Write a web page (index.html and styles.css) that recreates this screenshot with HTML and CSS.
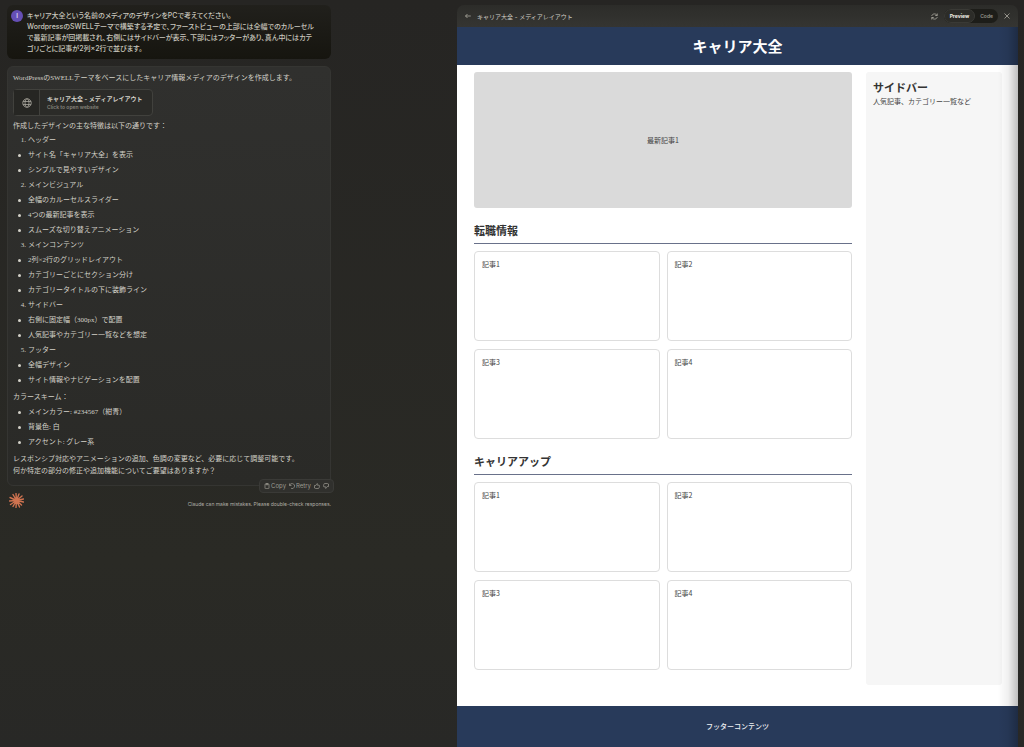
FILE: index.html
```html
<!DOCTYPE html>
<html lang="ja">
<head>
<meta charset="utf-8">
<meta name="viewport" content="width=device-width, initial-scale=1">
<title>キャリア大全 - メディアレイアウト</title>
<link rel="stylesheet" href="styles.css">
</head>
<body>
<div class="app">
  <section class="chat" aria-label="Chat">
    <div class="prompt">
      <span class="avatar">I</span>
      <p class="prompt-text">キャリア大全という名前のメディアのデザインをPCで考えてください。<br>WordpressのSWELLテーマで構築する予定で、ファーストビューの上部には全幅でのカルーセル<br>で最新記事が回掲載され、右側にはサイドバーが表示、下部にはフッターがあり、真ん中にはカテ<br>ゴリごとに記事が2列×2行で並びます。</p>
    </div>

    <article class="reply">
      <p>WordPressのSWELLテーマをベースにしたキャリア情報メディアのデザインを作成します。</p>
      <button class="artifact" type="button">
        <span class="artifact-icon">
          <svg width="10" height="10" viewBox="0 0 20 20" fill="none" stroke="currentColor" stroke-width="1.6"><circle cx="10" cy="10" r="8.5"/><ellipse cx="10" cy="10" rx="4" ry="8.5"/><path d="M2 7h16M2 13h16"/></svg>
        </span>
        <span class="artifact-label">
          <span class="artifact-title">キャリア大全 - メディアレイアウト</span>
          <span class="artifact-hint">Click to open website</span>
        </span>
      </button>
      <p>作成したデザインの主な特徴は以下の通りです：</p>
      <ol class="features">
        <li><span class="row">ヘッダー</span>
          <ul class="bullets"><li>サイト名「キャリア大全」を表示</li><li>シンプルで見やすいデザイン</li></ul></li>
        <li><span class="row">メインビジュアル</span>
          <ul class="bullets"><li>全幅のカルーセルスライダー</li><li>4つの最新記事を表示</li><li>スムーズな切り替えアニメーション</li></ul></li>
        <li><span class="row">メインコンテンツ</span>
          <ul class="bullets"><li>2列×2行のグリッドレイアウト</li><li>カテゴリーごとにセクション分け</li><li>カテゴリータイトルの下に装飾ライン</li></ul></li>
        <li><span class="row">サイドバー</span>
          <ul class="bullets"><li>右側に固定幅（300px）で配置</li><li>人気記事やカテゴリー一覧などを想定</li></ul></li>
        <li><span class="row">フッター</span>
          <ul class="bullets"><li>全幅デザイン</li><li>サイト情報やナビゲーションを配置</li></ul></li>
      </ol>
      <p class="colors-title">カラースキーム：</p>
      <ul class="bullets colors"><li>メインカラー: #234567（紺青）</li><li>背景色: 白</li><li>アクセント: グレー系</li></ul>
      <p>レスポンシブ対応やアニメーションの追加、色調の変更など、必要に応じて調整可能です。<br>何か特定の部分の修正や追加機能についてご要望はありますか？</p>

      <div class="actions">
        <button type="button"><svg width="6" height="6" viewBox="0 0 12 12" fill="none" stroke="currentColor" stroke-width="1.4"><rect x="2" y="2" width="8" height="9.3" rx="1"/><path d="M4 1h4v2.5H4z"/></svg>Copy</button>
        <button type="button"><svg width="6" height="6" viewBox="0 0 12 12" fill="none" stroke="currentColor" stroke-width="1.4"><path d="M1 1v4h4M1.3 5A5 5 0 1 1 4 10.6"/></svg>Retry</button>
        <button type="button" aria-label="Good response"><svg width="6" height="6" viewBox="0 0 12 12" fill="none" stroke="currentColor" stroke-width="1.4"><path d="M1 5h2.5L6 1.2c1.4 0 1.5 1.3 1 3.3h3.2c1 0 1 1 .8 1.8L10 10c-.2.6-.6 1-1.2 1H3.5L1 10z"/></svg></button>
        <button type="button" aria-label="Bad response"><svg width="6" height="6" viewBox="0 0 12 12" fill="none" stroke="currentColor" stroke-width="1.4"><path d="M11 7H8.5L6 10.8c-1.4 0-1.5-1.3-1-3.3H1.8c-1 0-1-1-.8-1.8L2 2c.2-.6.6-1 1.200-1h5.300L11 2z"/></svg></button>
      </div>
    </article>

    <footer class="chat-foot">
      <svg class="spark" width="15" height="15" viewBox="0 0 30 30" fill="none" stroke="currentColor" stroke-width="2.8" stroke-linecap="round"><path d="M15 15 14 1M15 15 20 2M15 15 26 6M15 15 29 12M15 15 29 18M15 15 25 24M15 15 21 28M15 15 14 29M15 15 8 27M15 15 3 23M15 15 1 16M15 15 2 9M15 15 8 3"/></svg>
      <span class="disclaimer">Claude can make mistakes. Please double-check responses.</span>
    </footer>
  </section>

  <section class="panel" aria-label="Preview">
    <div class="toolbar">
      <button class="icon-button" type="button" aria-label="Back"><svg width="6" height="6" viewBox="0 0 12 12" fill="none" stroke="currentColor" stroke-width="1.5"><path d="M11.5 6H1M5 2 1 6l4 4"/></svg></button>
      <span class="toolbar-title">キャリア大全 - メディアレイアウト</span>
      <button class="icon-button" type="button" aria-label="Refresh"><svg width="7" height="7" viewBox="0 0 14 14" fill="none" stroke="currentColor" stroke-width="1.5"><path d="M1.5 6C2 3.3 4.3 1.8 7 1.8c2.200 0 4 1.200 5 3M12.500 1v4h-4M12.500 8c-.5 2.700-2.800 4.200-5.500 4.200-2.200 0-4-1.200-5-3M1.500 13V9h4"/></svg></button>
      <div class="tabs">
        <button class="tab tab-active" type="button">Preview</button>
        <button class="tab" type="button">Code</button>
      </div>
      <button class="icon-button" type="button" aria-label="Close"><svg width="6" height="6" viewBox="0 0 12 12" fill="none" stroke="currentColor" stroke-width="1.5"><path d="m1 1 10 10M11 1 1 11"/></svg></button>
    </div>

    <div class="site">
      <header class="site-header"><h1>キャリア大全</h1></header>
      <div class="site-body">
        <main>
          <div class="hero">最新記事1</div>
          <section class="category">
            <h2>転職情報</h2>
            <div class="cards"><article>記事1</article><article>記事2</article><article>記事3</article><article>記事4</article></div>
          </section>
          <section class="category">
            <h2>キャリアアップ</h2>
            <div class="cards"><article>記事1</article><article>記事2</article><article>記事3</article><article>記事4</article></div>
          </section>
        </main>
        <aside class="sidebar">
          <h2>サイドバー</h2>
          <p>人気記事、カテゴリー一覧など</p>
        </aside>
      </div>
      <footer class="site-footer">フッターコンテンツ</footer>
    </div>
  </section>
</div>
</body>
</html>
```
FILE: styles.css
```css
* { box-sizing: border-box; }
body, p, h1, h2, ul, ol { margin: 0; padding: 0; }
ul, ol { list-style: none; }
button {
  margin: 0;
  padding: 0;
  border: 0;
  background: none;
  color: inherit;
  font: inherit;
}
svg { display: block; flex: none; }

body {
  background: linear-gradient(#262523, #2a2a25 75%, #282826);
  color: #c9c7be;
  font-family: Inter, "Noto Sans CJK JP", sans-serif;
  font-size: 7px;
}

.app {
  display: grid;
  grid-template-columns: 324fr 561fr;
  column-gap: 126px;
  min-height: 100vh;
  padding: 5px 6px 0 7px;
}

/* Chat */
.prompt {
  display: flex;
  gap: 4px;
  padding: 5px 4px;
  border-radius: 6px;
  background: linear-gradient(#21201c, #16150f);
}
.avatar {
  flex: none;
  width: 12px;
  height: 12px;
  border-radius: 50%;
  background: #654fb5;
  color: #e4dff5;
  font-size: 6px;
  font-weight: 600;
  line-height: 12px;
  text-align: center;
}
.prompt-text {
  line-height: 11px;
  font-weight: 500;
  font-feature-settings: "palt";
  white-space: nowrap;
}

.reply {
  position: relative;
  margin-top: 7px;
  padding: 5px 5px 8px;
  border: 1px solid #353532;
  border-radius: 6px;
  background: linear-gradient(#30302e, #2a2a27);
  color: #d3d1c8;
  font-family: "Liberation Serif", "Noto Sans CJK JP", serif;
  line-height: 12px;
}
.artifact {
  display: flex;
  width: 140px;
  height: 27px;
  margin: 5px 0 4px;
  border: 1px solid #41413d;
  border-radius: 4px;
  background: #2b2b28;
  font-family: Inter, "Noto Sans CJK JP", sans-serif;
  text-align: left;
}
.artifact-icon {
  display: grid;
  place-items: center;
  width: 26px;
  height: 100%;
  border-right: 1px solid #41413d;
  background: #262623;
  color: #a8a69d;
}
.artifact-label {
  display: flex;
  flex-direction: column;
  align-self: center;
  padding-left: 7px;
  line-height: 8px;
  white-space: nowrap;
}
.artifact-title { font-size: 6px; font-weight: 600; }
.artifact-hint { color: #85837b; font-size: 5px; font-weight: 600; }

.features { margin-top: 1px; counter-reset: feature; }
.features > li { counter-increment: feature; }
.row, .bullets li {
  display: flex;
  align-items: center;
  line-height: 15px;
}
.row::before {
  content: counter(feature) ".";
  width: 13px;
  margin-right: 2px;
  text-align: right;
}
.bullets li::before {
  content: "";
  width: 3px;
  height: 3px;
  margin: 0 7px 0 5px;
  border-radius: 50%;
  background: currentColor;
}
.colors-title { margin-top: 3px; }
.colors { margin: 2px 0 3px; }

.actions {
  position: absolute;
  right: -4px;
  bottom: -8px;
  display: flex;
  align-items: center;
  gap: 3px;
  height: 14px;
  padding: 0 4px;
  border: 1px solid #3a3a37;
  border-radius: 4px;
  background: #30302d;
  color: #9d9b92;
  font-family: Inter, sans-serif;
  font-size: 6px;
}
.actions button { display: flex; align-items: center; gap: 1px; }

.chat-foot {
  display: flex;
  align-items: center;
  justify-content: space-between;
  padding: 7px 0 0 2px;
}
.spark { color: #cf7350; }
.disclaimer {
  padding-top: 7px;
  color: #b0aea5;
  font-size: 5px;
}

/* Preview panel */
.panel {
  position: relative;
  display: flex;
  flex-direction: column;
  overflow: hidden;
  border-radius: 7px 7px 0 0;
}
.toolbar {
  display: flex;
  align-items: center;
  height: 22px;
  padding: 0 8px;
  background: linear-gradient(#2c2c29, #353532);
  color: #b5b3aa;
}
.toolbar-title {
  flex: 1;
  padding-left: 6px;
  color: #d0cec5;
  font-size: 6px;
}
.tabs {
  display: flex;
  height: 14px;
  margin: 0 6px;
  border-radius: 7px;
  background: #1d1d19;
}
.tab {
  padding: 0 5px;
  border-radius: 7px;
  color: #98968d;
  font-size: 5px;
  font-weight: 600;
}
.tab-active {
  border: 1px solid #3a3a36;
  background: #2c2c28;
  color: #efede6;
  font-weight: 700;
}

.site {
  position: relative;
  display: flex;
  flex: 1;
  flex-direction: column;
  background: #fff;
  color: #444;
  font-family: "Noto Sans CJK JP", sans-serif;
}
.site::after {
  content: "";
  position: absolute;
  inset: 0 0 0 auto;
  width: 20px;
  background: linear-gradient(to right, rgba(0, 0, 0, 0), rgba(0, 0, 0, 0.06) 50%, rgba(0, 0, 0, 0.25));
  pointer-events: none;
}
.site-header {
  background: #283a5a;
  color: #fff;
  text-align: center;
}
.site-header h1 {
  font-size: 15px;
  line-height: 38px;
}
.site-body {
  display: grid;
  flex: 1;
  grid-template-columns: 378fr 136fr;
  column-gap: 14px;
  padding: 7px 16px 21px 17px;
}
.hero {
  display: grid;
  place-items: center;
  height: 136px;
  border-radius: 3px;
  background: #dadada;
}
.category { margin-top: 14px; }
.category h2 {
  padding-bottom: 5px;
  border-bottom: 1px solid #69718a;
  color: #333;
  font-size: 11px;
  line-height: 16px;
}
.cards {
  display: grid;
  grid-template-columns: 1fr 1fr;
  grid-auto-rows: 90px;
  gap: 8px 7px;
  margin-top: 7px;
}
.cards article {
  padding: 6px 7px;
  border: 1px solid #ddd;
  border-radius: 4px;
  line-height: 12px;
}
.sidebar {
  padding: 7px;
  border-radius: 3px;
  background: #f6f6f6;
}
.sidebar h2 {
  color: #333;
  font-size: 11px;
  line-height: 16px;
}
.sidebar p { line-height: 12px; }
.site-footer {
  background: #283a5a;
  color: #eef0f4;
  font-weight: 500;
  line-height: 41px;
  text-align: center;
}
```
